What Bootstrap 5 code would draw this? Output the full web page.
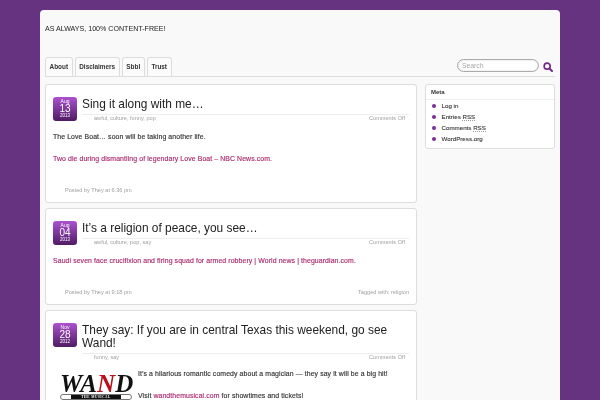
<!DOCTYPE html>
<html lang="en"><head><meta charset="utf-8"><title>As always</title>
<link href="https://cdn.jsdelivr.net/npm/bootstrap@5.3.0/dist/css/bootstrap.min.css" rel="stylesheet">
<style>
html,body{height:400px;overflow:hidden}
body{background:#663380;font-family:"Liberation Sans",Arial,sans-serif;font-size:6.9px;color:#333;line-height:1.2}
.shell{width:520px;height:400px;margin:10px 0 0 40px;background:#f9f9f9;border-radius:4px 4px 0 0;padding:0 5px;overflow:hidden;will-change:transform}
.tagline{height:47px;padding-top:14px;font-size:7.1px;color:#222;line-height:10px}
.topbar{height:20px;border-bottom:1px solid #ddd}
.tab-item{height:19px;border:1px solid #ddd;border-bottom:0;border-radius:3px 3px 0 0;background:#fbfbfb;font-weight:700;font-size:6.4px;color:#333;padding:0 3.6px;line-height:18px;margin-right:2px}
.searchbox{width:82px;height:13px;border:1px solid #aaa;border-radius:7px;background:#fff;color:#aaa;font-size:6.8px;line-height:11px;padding-left:4px;margin-right:4px;box-shadow:inset 0 0 2px #ccc}
.search-row{margin:2px 2px 0 0}
.search-icon{margin-top:3px}
.mainrow{margin-top:7px;gap:8px}
.postcol{width:372px;flex:none}
.sidecol{width:130px;flex:none}
.entry{background:#fff;border:1px solid #ddd;border-radius:3px;padding:12px 7px 0;margin-bottom:5px;position:relative}
.e1{height:119px}.e2{height:97px}.e3{height:200px}
.datebox{width:24px;height:24px;border-radius:3px;background:linear-gradient(#ab52cf,#4f1b63);color:#fff;text-align:center;flex:none;margin-right:5px;font-size:5px;line-height:6px;padding-top:1px}
.datebox b{display:block;font-weight:400;font-size:10px;line-height:9px}
.datebox span{display:block;line-height:6px}
.datebox i{display:block;font-style:normal;font-size:4.5px;line-height:6px}
.headwrap{flex:1;min-width:0}
.ptitle{font-size:11.9px;line-height:13px;color:#222;font-weight:400;margin:0;padding:1px 0 3px;border-bottom:1px solid #eee}
.metarow{color:#a0a0a0;font-size:5.6px;line-height:7px;padding:0 4px 0 12px}
.ptext{font-size:6.9px;color:#333;margin:0;line-height:9px;letter-spacing:.1px;-webkit-text-stroke:.15px}
.ptext a{color:#ab2a70;text-decoration:none}
.b1{margin-top:10px}.b2{margin-top:13px}
.foot{position:absolute;left:19px;right:7px;bottom:8px;color:#a0a0a0;font-size:5.6px;line-height:8px}
.widget{background:#fff;border:1px solid #ddd;border-radius:3px;height:65px}
.wtitle{height:15px;border-bottom:1px solid #eee;font-weight:700;font-size:6px;color:#333;line-height:14px;padding-left:5px}
.wlist{list-style:none;margin:0;padding:0 0 0 6px}
.wlist li{height:11px;line-height:11px;font-size:6.2px;color:#333;display:flex;align-items:center;-webkit-text-stroke:.1px}
.wlist li::before{content:"";width:4px;height:4px;border-radius:50%;background:#7a2f96;margin-right:5.5px;flex:none}
.acr{border-bottom:1px dotted #999;line-height:8px}
.logo-wrap{width:85px;flex:none;padding:13px 0 0 7px;height:40px;overflow:hidden}
.logo-word{font-family:"Liberation Serif",serif;font-style:italic;font-weight:700;font-size:25px;line-height:19px;color:#111;white-space:nowrap}
.logo-word em{color:#b5121b;font-style:italic}
.logo-bar{height:6px;width:72px;background:#fff;border:1px solid #777;border-radius:3px;margin-top:1px}
.logo-band{background:#111;color:#fff;font-size:3.4px;line-height:4px;letter-spacing:.5px;height:4px;width:50px;font-weight:700;font-family:"Liberation Serif",serif}
.wandbody{flex:1;padding-top:8px}
</style></head><body>
<div class="shell">
<div class="tagline">AS ALWAYS, 100% CONTENT-FREE!</div>
<div class="topbar d-flex justify-content-between">
<div class="d-flex align-items-end"><span class="tab-item">About</span><span class="tab-item">Disclaimers</span><span class="tab-item">Sbbl</span><span class="tab-item">Trust</span></div>
<div class="search-row d-flex align-items-start"><div class="searchbox">Search</div>
<svg width="10" height="10" viewBox="0 0 12 12" class="search-icon"><circle cx="5" cy="5" r="3.6" fill="none" stroke="#6f2a8c" stroke-width="2"/><path d="M7.6 7.6 10.8 10.8" stroke="#6f2a8c" stroke-width="2.4" stroke-linecap="round"/></svg></div>
</div>
<div class="mainrow d-flex align-items-start">
<div class="postcol">
<article class="entry e1">
<div class="d-flex"><div class="datebox"><span>Aug</span><b>13</b><i>2013</i></div>
<div class="headwrap"><h2 class="ptitle">Sing it along with me…</h2>
<div class="metarow d-flex justify-content-between"><span>awful, culture, funny, pop</span><span>Comments Off</span></div></div></div>
<p class="ptext b1">The Love Boat… soon will be taking another life.</p>
<p class="ptext b2"><a href="#">Two die during dismantling of legendary Love Boat – NBC News.com.</a></p>
<div class="foot"><span>Posted by They at 6:36 pm</span></div>
</article>
<article class="entry e2">
<div class="d-flex"><div class="datebox"><span>Aug</span><b>04</b><i>2013</i></div>
<div class="headwrap"><h2 class="ptitle">It’s a religion of peace, you see…</h2>
<div class="metarow d-flex justify-content-between"><span>awful, culture, pop, say</span><span>Comments Off</span></div></div></div>
<p class="ptext b1"><a href="#">Saudi seven face crucifixion and firing squad for armed robbery | World news | theguardian.com.</a></p>
<div class="foot d-flex justify-content-between"><span>Posted by They at 9:18 pm</span><span>Tagged with: religion</span></div>
</article>
<article class="entry e3">
<div class="d-flex"><div class="datebox"><span>Nov</span><b>28</b><i>2012</i></div>
<div class="headwrap"><h2 class="ptitle">They say: If you are in central Texas this weekend, go see Wand!</h2>
<div class="metarow d-flex justify-content-between"><span>funny, say</span><span>Comments Off</span></div></div></div>
<div class="d-flex">
<div class="logo-wrap"><div class="logo-word">WA<em>N</em>D</div><div class="logo-bar d-flex justify-content-center"><div class="logo-band text-center">THE MUSICAL</div></div></div>
<div class="wandbody"><p class="ptext">It’s a hilarious romantic comedy about a magician — they say it will be a big hit!</p>
<p class="ptext b2">Visit <a href="#">wandthemusical.com</a> for showtimes and tickets!</p></div>
</div>
</article>
</div>
<aside class="sidecol"><div class="widget"><div class="wtitle">Meta</div>
<ul class="wlist"><li>Log in</li><li><span>Entries&nbsp;<span class="acr">RSS</span></span></li><li><span>Comments&nbsp;<span class="acr">RSS</span></span></li><li>WordPress.org</li></ul></div></aside>
</div>
</div>
<script src="https://cdn.jsdelivr.net/npm/bootstrap@5.3.0/dist/js/bootstrap.bundle.min.js"></script>
</body></html>
